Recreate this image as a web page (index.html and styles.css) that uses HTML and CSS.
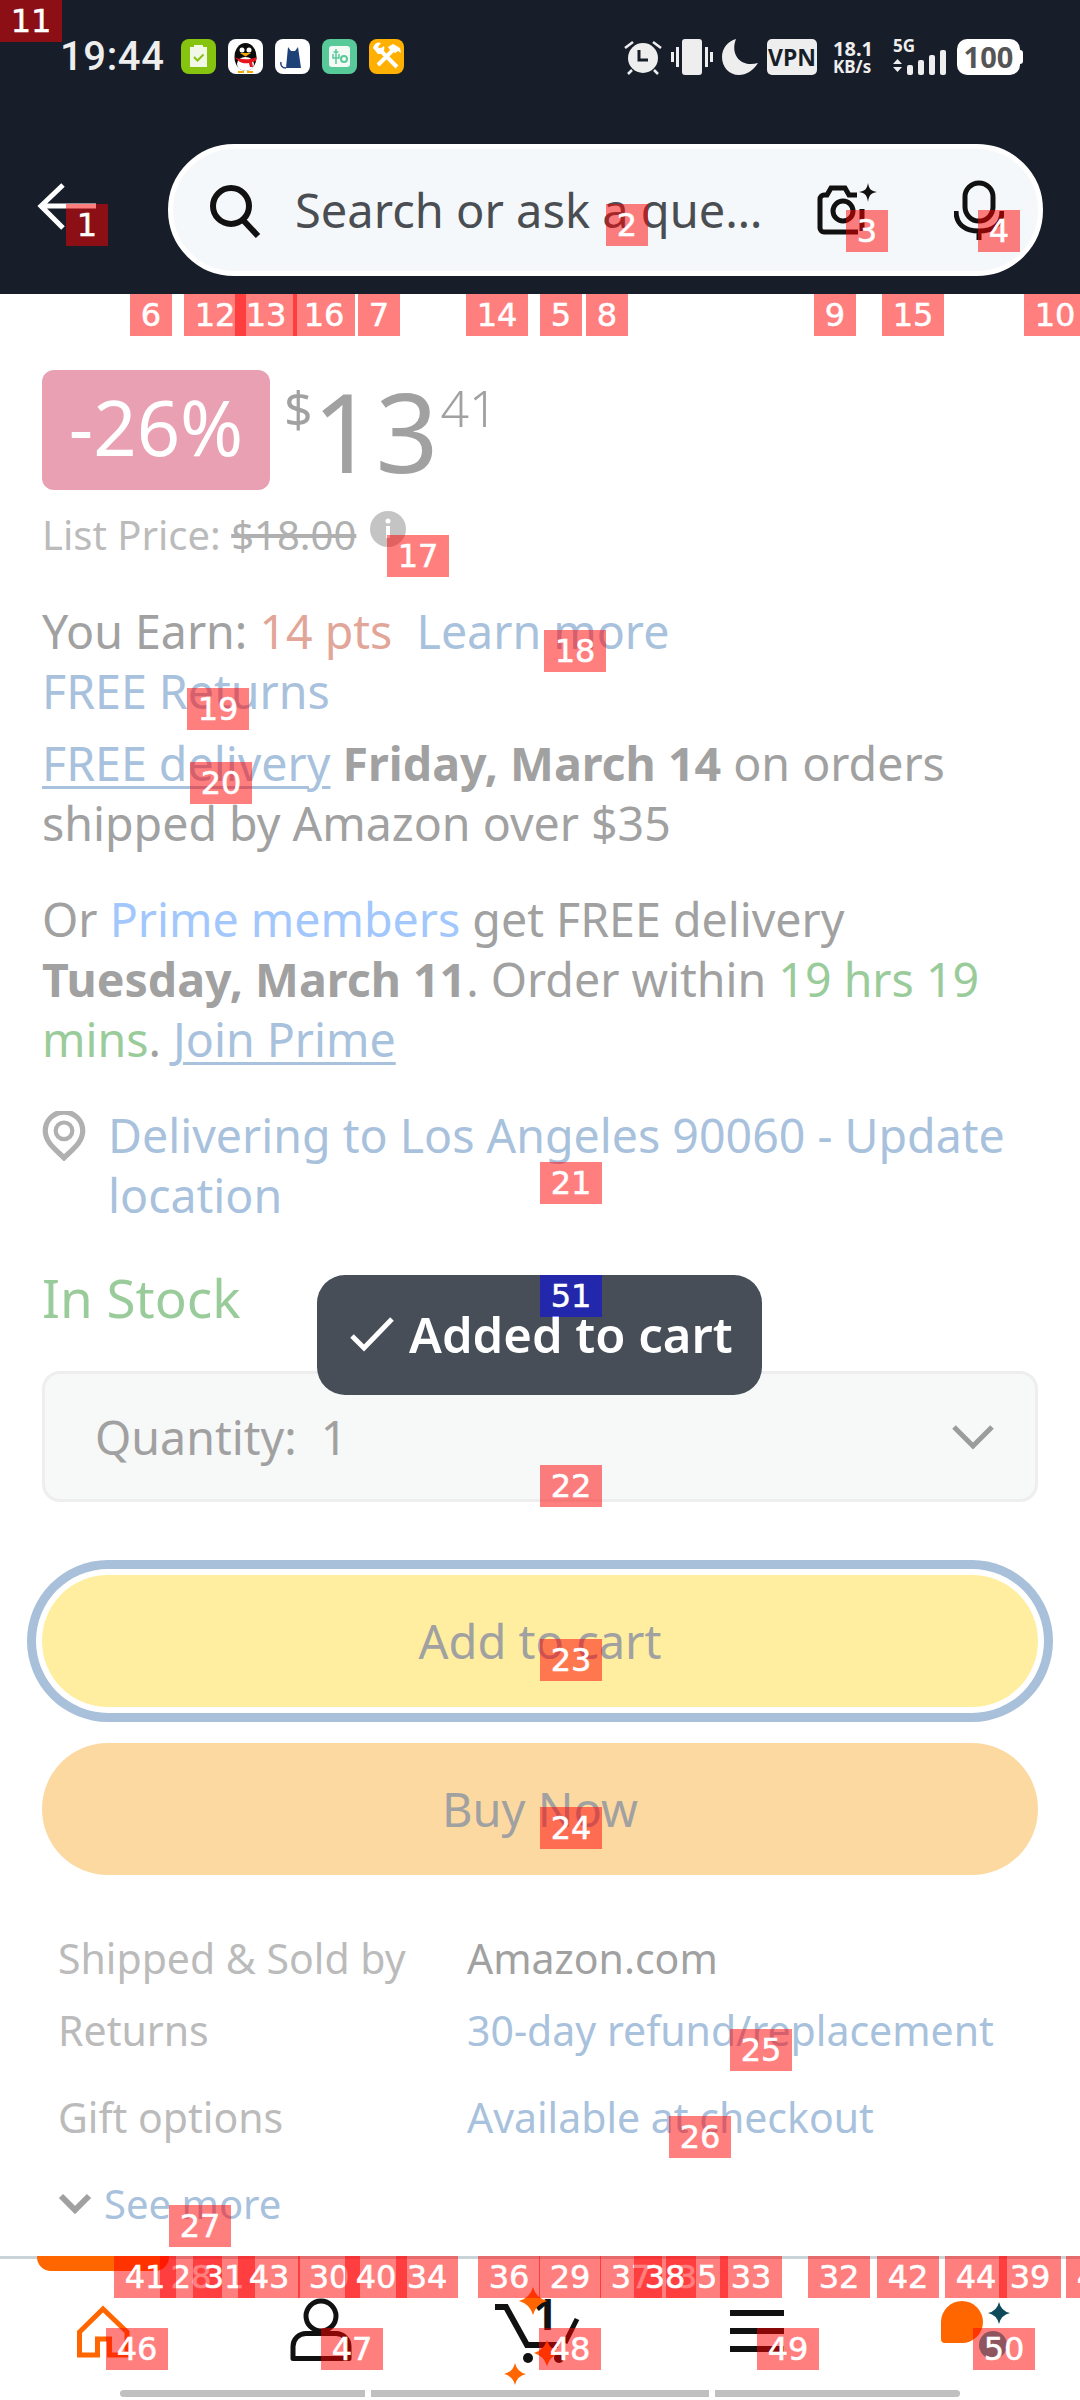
FILE: index.html
```html
<!DOCTYPE html>
<html lang="en">
<head>
<meta charset="utf-8">
<title>Amazon product</title>
<link rel="stylesheet" href="styles.css">
</head>
<body>
<div class="screen">
  <header class="top">
    <div class="status">
      <span class="time">19:44</span>
      <div class="apps">
        <svg class="app" viewBox="0 0 35 35"><rect width="35" height="35" rx="8" fill="#86c410"/><rect x="9" y="8" width="17" height="20" fill="#f2f8e8"/><rect x="13" y="6" width="9" height="3" fill="#f2f8e8"/><path d="M13 18l3.500 3.500 6-6" fill="none" stroke="#86c410" stroke-width="2"/></svg>
        <svg class="app" viewBox="0 0 35 35"><rect width="35" height="35" rx="8" fill="#fff"/><ellipse cx="17.500" cy="18" rx="11" ry="14" fill="#0c0c0c"/><ellipse cx="17.500" cy="25" rx="8.500" ry="7" fill="#fff"/><circle cx="14" cy="11" r="2.500" fill="#fff"/><circle cx="21" cy="11" r="2.500" fill="#fff"/><path d="M12 14h11l-5.500 3.500z" fill="#f5a800"/><path d="M6 18c6 3 17 3 23 0l-1 4-4 1 1 5-3 0-1-4c-3 .5-6 .5-9-1z" fill="#e8141c"/><path d="M10 32h6v2h-6zM19 32h6v2h-6z" fill="#f5a800"/></svg>
        <svg class="app" viewBox="0 0 35 35"><rect width="35" height="35" rx="8" fill="#fff"/><path d="M13 8l3 4h4l3-4 3 21H11z" fill="#1e4178"/><path d="M11 29c-4 0-6-3-5-6" fill="none" stroke="#1e4178" stroke-width="1.500"/></svg>
        <svg class="app" viewBox="0 0 35 35"><rect width="35" height="35" rx="8" fill="#58c998"/><rect x="7" y="7" width="21" height="21" rx="3" fill="#f4fbf7"/><path d="M14 10v15M11.500 13h5M11 15v4h6v-4" fill="none" stroke="#58c998" stroke-width="1.500"/><circle cx="22" cy="20" r="3" fill="none" stroke="#58c998" stroke-width="2"/></svg>
        <svg class="app" viewBox="0 0 35 35"><rect width="35" height="35" rx="8" fill="#ffb000"/><path d="M10 10l18 18M24 11L9 26" stroke="#fff" stroke-width="4"/><path d="M4 9a6 6 0 0 1 8-5l-3 4 2 2 4-3a6 6 0 0 1-6 8z" fill="#fff"/><path d="M19 8l5-3 7 4 1 5-3-2-3 2-5-3z" fill="#fff"/></svg>
      </div>
      <div class="sys">
        <svg class="sys-alarm" viewBox="0 0 38 36"><circle cx="19" cy="19" r="15" fill="#eee"/><path d="M14 11v10h9" transform="translate(1 0)" fill="none" stroke="#171e2a" stroke-width="3"/><path d="M1 9l8-6M37 9l-8-6M4 35l4-4M34 35l-4-4" stroke="#eee" stroke-width="2.500"/></svg>
        <svg class="sys-vib" viewBox="0 0 42 36"><rect x="11" width="20" height="36" rx="3" fill="#eee"/><rect x="0" y="13" width="3" height="10" fill="#eee"/><rect x="5" y="8" width="3" height="20" fill="#eee"/><rect x="34" y="8" width="3" height="20" fill="#eee"/><rect x="39" y="13" width="3" height="10" fill="#eee"/></svg>
        <svg class="sys-moon" viewBox="0 0 36 36"><path d="M14 0C8 15 18 29 36 24 31 32 24 36 17 36 7 36 0 28 0 18 0 9 6 2 14 0z" fill="#eee"/></svg>
        <span class="vpn">VPN</span>
        <span class="speed"><span>18.1</span><span class="unit">KB/s</span></span>
        <span class="net">
          <span class="fiveg">5G</span>
          <svg class="signal" viewBox="0 0 54 25"><path d="M0 14l4.500-5 4.500 5zM0 17l4.500 5 4.500-5z" fill="#eee"/><rect x="14" y="15" width="6" height="10" rx="2" fill="#eee"/><rect x="25" y="10" width="6" height="15" rx="2" fill="#eee"/><rect x="36" y="5" width="6" height="20" rx="2" fill="#eee"/><rect x="47" y="0" width="6" height="25" rx="2" fill="#eee"/></svg>
        </span>
        <span class="battery">100</span>
      </div>
    </div>
    <div class="search-row">
      <svg class="back" viewBox="0 0 60 50"><path d="M26 3L4 24l22 22M4 24h55" fill="none" stroke="#fff" stroke-width="5"/></svg>
      <div class="search">
        <svg class="ic-search" viewBox="0 0 56 56"><circle cx="24" cy="24" r="18" fill="none" stroke="#111" stroke-width="6"/><path d="M36 38l15 16" stroke="#111" stroke-width="6"/></svg>
        <span class="placeholder">Search or ask a que…</span>
        <svg class="ic-cam" viewBox="0 0 60 54"><path d="M40 12H32l-4-7H14L10 12H7a4 4 0 0 0-4 4v29a4 4 0 0 0 4 4h34" fill="none" stroke="#111" stroke-width="5"/><path d="M45 26v22" stroke="#111" stroke-width="5"/><circle cx="26" cy="28" r="10" fill="none" stroke="#111" stroke-width="5"/><path d="M51 0c1 6 3 8 9 9-6 1-8 3-9 10-1-7-3-9-9-10 6-1 8-3 9-9z" fill="#111"/></svg>
        <svg class="ic-mic" viewBox="0 0 50 60"><rect x="11" y="3" width="28" height="38" rx="14" fill="none" stroke="#111" stroke-width="5"/><path d="M2 31c0 14 10 20 23 20s23-6 23-20M25 50v10" fill="none" stroke="#111" stroke-width="5"/></svg>
      </div>
    </div>
  </header>

  <main class="content">
    <div class="price-row">
      <span class="discount">-26%</span>
      <span class="cur">$</span><span class="whole">13</span><span class="cents">41</span>
    </div>
    <div class="list-row">List Price: <s>$18.00</s>
      <svg class="info" viewBox="0 0 36 36"><circle cx="18" cy="18" r="18" fill="#c4c4c4"/><circle cx="18" cy="10" r="2.500" fill="#fff"/><rect x="16" y="15" width="4" height="12" fill="#fff"/></svg>
    </div>
    <p class="line earn">You Earn: <span class="pts">14 pts</span>&nbsp; <a class="lnk">Learn more</a></p>
    <p class="line"><a class="lnk">FREE Returns</a></p>
    <p class="line delivery"><a class="lnk ul">FREE delivery</a> <b>Friday, March 14</b> on orders<br>shipped by Amazon over $35</p>
    <p class="line prime">Or <a class="lnk-prime">Prime members</a> get FREE delivery<br><b>Tuesday, March 11</b>. Order within <span class="grn">19 hrs 19<br>mins</span>. <a class="lnk ul">Join Prime</a></p>
    <div class="loc">
      <svg class="pin" viewBox="0 0 42 48"><path d="M21 45C13 37 3 30 3 19a18 18 0 0 1 36 0c0 11-10 18-18 26z" fill="#fff" stroke="#b0b0b0" stroke-width="5"/><circle cx="21" cy="19" r="8" fill="none" stroke="#b0b0b0" stroke-width="4"/></svg>
      <p class="line"><a class="lnk">Delivering to Los Angeles 90060 - Update<br>location</a></p>
    </div>
    <p class="stock">In Stock</p>
    <div class="qty">
      <span>Quantity:&nbsp; 1</span>
      <svg class="chev" viewBox="0 0 44 26"><path d="M3 3l19 19L41 3" fill="none" stroke="#9c9c9c" stroke-width="5"/></svg>
    </div>
    <div class="btn btn-add">Add to cart</div>
    <div class="btn btn-buy">Buy Now</div>
    <dl class="facts">
      <div class="fact"><dt>Shipped &amp; Sold by</dt><dd>Amazon.com</dd></div>
      <div class="fact f2"><dt>Returns</dt><dd class="lnk">30-day refund/replacement</dd></div>
      <div class="fact f3"><dt>Gift options</dt><dd class="lnk">Available at checkout</dd></div>
    </dl>
    <div class="more">
      <svg class="more-chev" viewBox="0 0 34 22"><path d="M3 3l14 14L31 3" fill="none" stroke="#a0a0a0" stroke-width="6"/></svg>
      <a class="lnk">See more</a>
    </div>
  </main>

  <nav class="nav">
    <span class="tab-ind"></span>
    <div class="nav-items">
      <svg class="nav-ic" viewBox="0 0 216 131"><path d="M79.500 96V73L103 50l24 23v23h-17.500V80h-12v16z" fill="none" stroke="#f60" stroke-width="5"/></svg>
      <svg class="nav-ic" viewBox="0 0 216 131"><circle cx="105" cy="57" r="15" fill="none" stroke="#111" stroke-width="5"/><path d="M90 75h30a13 13 0 0 1 13 13v12H77V88a13 13 0 0 1 13-13z" transform="translate(0 -.500)" fill="none" stroke="#111" stroke-width="5" stroke-linejoin="round"/></svg>
      <svg class="nav-ic" viewBox="0 0 216 131"><path d="M63 48h11l21 38h31" fill="none" stroke="#111" stroke-width="6"/><path d="M145 60l-12 24" stroke="#111" stroke-width="5"/><circle cx="96" cy="99" r="5" fill="#111"/><circle cx="127" cy="99" r="5" fill="#111"/><text class="cart-n" x="101" y="71">1</text><path d="M101 28Q104 39 115 42Q104 45 101 56Q98 45 87 42Q98 39 101 28ZM115 81Q118 91 128 94Q118 97 115 107Q112 97 102 94Q112 91 115 81ZM83 104Q85 113 94 115Q85 117 83 126Q81 117 72 115Q81 113 83 104Z" fill="#f60"/></svg>
      <svg class="nav-ic" viewBox="0 0 216 131"><path d="M82 51h54v6H82zM82 69h54v6H82zM82 87h54v6H82z" fill="#111"/></svg>
      <svg class="nav-ic" viewBox="0 0 216 131"><circle cx="129" cy="86" r="14" fill="#1faabf"/><path d="M77 63a21 21 0 1 1 21 21H81a4 4 0 0 1-4-4z" fill="#f60"/><path d="M135 43Q137 52 146 54Q137 56 135 65Q133 56 124 54Q133 52 135 43Z" fill="#0f4a5a"/></svg>
    </div>
    <div class="gesture"><span class="seg seg-l"></span><span class="seg seg-m"></span><span class="seg seg-r"></span></div>
  </nav>

  <div class="toast">
    <svg class="toast-check" viewBox="0 0 46 36"><path d="M3 20l12 12L43 3" fill="none" stroke="#fff" stroke-width="5"/></svg>
    <span>Added to cart</span>
  </div>

  <span class="bd dk n1">1</span><span class="bd n2">2</span><span class="bd n3">3</span><span class="bd n4">4</span><span class="bd n5">5</span><span class="bd n6">6</span><span class="bd n7">7</span><span class="bd n8">8</span><span class="bd n9">9</span><span class="bd n10">10</span><span class="bd n11">11</span><span class="bd n12">12</span><span class="bd n13">13</span><span class="bd n14">14</span><span class="bd n15">15</span><span class="bd n16">16</span><span class="bd n17">17</span><span class="bd n18">18</span><span class="bd n19">19</span><span class="bd n20">20</span><span class="bd n21">21</span><span class="bd n22">22</span><span class="bd n23">23</span><span class="bd n24">24</span><span class="bd n25">25</span><span class="bd n26">26</span><span class="bd n27">27</span><span class="bd n28">28</span><span class="bd n29">29</span><span class="bd n30">30</span><span class="bd n31">31</span><span class="bd n32">32</span><span class="bd n33">33</span><span class="bd n34">34</span><span class="bd n35">35</span><span class="bd n36">36</span><span class="bd n37">37</span><span class="bd n38">38</span><span class="bd n39">39</span><span class="bd n40">40</span><span class="bd n41">41</span><span class="bd n42">42</span><span class="bd n43">43</span><span class="bd n44">44</span><span class="bd n45">45</span><span class="bd n46">46</span><span class="bd n47">47</span><span class="bd n48">48</span><span class="bd n49">49</span><span class="bd n50">50</span><span class="bd blue n51">51</span>
</div>
</body>
</html>
```
FILE: styles.css
```css
* { box-sizing: border-box; }
html, body { margin: 0; padding: 0; }
body { width: 1080px; height: 2400px; overflow: hidden; background: #fff; font-family: "Noto Sans", "Open Sans", sans-serif; color: #a1a1a1; }
p, dl, dd { margin: 0; }
a { color: inherit; }
.screen { position: relative; width: 1080px; height: 2400px; overflow: hidden; display: flex; flex-direction: column; }

/* header */
.top { height: 294px; background: #171e2a; flex: none; }
.status { height: 144px; padding: 39px 60px 0 60px; display: flex; align-items: flex-start; }
.time { width: 121px; height: 36px; font: 500 40px/36px Roboto, sans-serif; color: #eee; letter-spacing: .6px; }
.apps { display: flex; gap: 12px; }
.app { width: 35px; height: 35px; display: block; }
.sys { margin-left: auto; display: flex; align-items: flex-start; }
.sys-alarm { width: 38px; height: 36px; display: block; }
.sys-vib { width: 42px; height: 36px; margin-left: 9px; display: block; }
.sys-moon { width: 36px; height: 36px; margin-left: 9px; display: block; }
.vpn { width: 50px; height: 36px; margin-left: 9px; background: #eee; border-radius: 5px; color: #171e2a; font: 700 23px/36px "Noto Sans", sans-serif; text-align: center; }
.speed { width: 60px; margin-left: 16px; display: flex; flex-direction: column; color: #eee; font: 700 20px/19px "Noto Sans", sans-serif; height: 36px; }
.unit { font-size: 17px; line-height: 17px; }
.net { width: 54px; height: 36px; margin-left: 0; display: flex; flex-direction: column; }
.fiveg { color: #eee; font: 700 17px/14px "Noto Sans", sans-serif; }
.signal { width: 54px; height: 25px; display: block; margin-top: -3px; }
.battery { position: relative; width: 63px; height: 36px; margin-left: 10px; background: #fff; border-radius: 10px; color: #555; font: 700 29px/36px "Noto Sans", sans-serif; text-align: center; }
.battery::after { content: ""; position: absolute; right: -3px; top: 11px; width: 3px; height: 14px; background: #fff; border-radius: 0 3px 3px 0; }
.search-row { height: 132px; display: flex; align-items: center; padding-left: 37px; }
.back { width: 60px; height: 50px; display: block; flex: none; margin-top: -6px; }
.search { width: 875px; height: 132px; margin-left: 71px; background: #f5f8fa; border: 5px solid #fff; border-radius: 66px; display: flex; align-items: center; padding-left: 34px; }
.ic-search { width: 56px; height: 56px; flex: none; display: block; }
.placeholder { width: 525px; margin-left: 32px; flex: none; font-size: 47px; color: #4a4e52; white-space: nowrap; }
.ic-cam { width: 60px; height: 54px; flex: none; display: block; margin-left: -3px; }
.ic-mic { width: 50px; height: 60px; flex: none; display: block; margin-left: 77px; }

/* content */
.content { height: 1962px; flex: none; padding: 76px 42px 0; overflow: hidden; font-size: 46.5px; }
.price-row { display: flex; align-items: flex-start; height: 120px; }
.discount { width: 228px; height: 120px; background: #e9a0b2; border-radius: 12px; color: #fff; font-size: 76px; line-height: 114px; text-align: center; }
.cur { font-size: 50px; line-height: 48px; margin: 14px 0 0 14px; }
.whole { font-size: 110px; line-height: 120px; }
.cents { font-size: 50px; line-height: 48px; font-weight: 300; margin: 14px 0 0 2px; }
.list-row { margin-top: 20px; height: 50px; line-height: 50px; font-size: 40px; color: #bbb; display: flex; align-items: center; white-space: pre; }
.list-row s { color: #b0b0b0; }
.info { width: 36px; height: 36px; margin: -12px 0 0 14px; display: block; }
.line { font-size: 46.5px; line-height: 60px; white-space: nowrap; }
.earn { margin-top: 41px; }
.delivery { margin-top: 12px; }
.prime { margin-top: 36px; }
.lnk { color: #a8c1dc; }
.ul { text-decoration: underline; text-decoration-thickness: 3px; text-underline-offset: 5px; }
.lnk-prime { color: #a1c7fd; }
.pts { color: #e2a699; }
.grn { color: #99cc9a; }
b { font-weight: 700; }
.loc { margin-top: 36px; display: flex; gap: 22px; align-items: flex-start; }
.pin { width: 44px; height: 50px; margin-top: 6px; flex: none; display: block; }
.stock { margin-top: 43px; font-size: 53px; line-height: 60px; color: #99cc9a; }
.qty { margin-top: 43px; height: 131px; border: 3px solid #eee; background: #f7f8f8; border-radius: 18px; display: flex; align-items: center; padding: 0 40px 0 50px; justify-content: space-between; font-size: 46.5px; }
.chev { width: 44px; height: 26px; display: block; }
.btn { height: 132px; border-radius: 66px; display: flex; align-items: center; justify-content: center; font-size: 47px; }
.btn-add { margin-top: 73px; background: #ffee9f; box-shadow: 0 0 0 6px #fff, 0 0 0 15px #a8c0d9; }
.btn-buy { margin-top: 36px; background: #fdd9a2; }
.facts { margin-top: 53px; padding-left: 16px; font-size: 41px; }
.fact { display: flex; height: 60px; line-height: 60px; }
.f2 { margin-top: 12px; }
.f3 { margin-top: 27px; }
.fact dt { width: 409px; color: #bbb; }
.more { margin-top: 27px; padding-left: 16px; display: flex; align-items: center; gap: 12px; font-size: 40px; line-height: 60px; }
.more-chev { width: 34px; height: 22px; display: block; }

/* toast */
.toast { position: absolute; left: 317px; top: 1275px; width: 445px; height: 120px; background: #474e57; border-radius: 28px; display: flex; align-items: center; padding: 0 0 2px 32px; gap: 14px; color: #fff; font-size: 49px; font-weight: 600; }
.toast-check { width: 46px; height: 36px; display: block; }

/* nav */
.nav { position: relative; height: 144px; flex: none; border-top: 3px solid #c8d4d8; background: #fff; }
.tab-ind { position: absolute; left: 37px; top: -3px; width: 132px; height: 15px; background: #f60; border-radius: 0 0 14px 14px; }
.nav-items { display: grid; grid-template-columns: repeat(5, 216px); height: 131px; }
.nav-ic { width: 216px; height: 131px; display: block; overflow: visible; }
.cart-n { font: 700 43px "Noto Sans", sans-serif; fill: #111; }
.gesture { display: flex; gap: 6px; padding-left: 120px; }
.seg { height: 7px; background: #c0c0c0; display: block; }
.seg-l { width: 245px; border-radius: 4px 0 0 4px; }
.seg-m { width: 338px; }
.seg-r { width: 245px; border-radius: 0 4px 4px 0; }

/* annotation badges */
.bd { position: absolute; height: 42px; padding: 0 10.7px; background: rgba(255, 0, 0, .5); color: #fff; font: 400 32px/42px "DejaVu Sans", sans-serif; -webkit-text-stroke: .5px #fff; white-space: nowrap; }
.blue { background: rgba(0, 0, 255, .5); }
.n1 { left: 66px; top: 204px; } .n2 { left: 606px; top: 204px; } .n3 { left: 846px; top: 210px; } .n4 { left: 978px; top: 210px; }
.n5 { left: 540px; top: 294px; } .n6 { left: 130px; top: 294px; } .n7 { left: 358px; top: 294px; } .n8 { left: 586px; top: 294px; }
.n9 { left: 814px; top: 294px; } .n10 { left: 1024px; top: 294px; } .n11 { left: 0; top: 0; } .n12 { left: 184px; top: 294px; }
.n13 { left: 235px; top: 294px; } .n14 { left: 466px; top: 294px; } .n15 { left: 882px; top: 294px; } .n16 { left: 293px; top: 294px; }
.n17 { left: 387px; top: 535px; } .n18 { left: 544px; top: 630px; } .n19 { left: 187px; top: 688px; } .n20 { left: 190px; top: 762px; }
.n21 { left: 540px; top: 1162px; } .n22 { left: 540px; top: 1465px; } .n23 { left: 540px; top: 1639px; } .n24 { left: 540px; top: 1807px; }
.n25 { left: 730px; top: 2029px; } .n26 { left: 669px; top: 2116px; } .n27 { left: 169px; top: 2205px; }
.n28 { left: 160px; top: 2256px; } .n29 { left: 539px; top: 2256px; } .n30 { left: 298px; top: 2256px; } .n31 { left: 193px; top: 2256px; }
.n32 { left: 808px; top: 2256px; } .n33 { left: 720px; top: 2256px; } .n34 { left: 396px; top: 2256px; } .n35 { left: 666px; top: 2256px; }
.n36 { left: 478px; top: 2256px; } .n37 { left: 600px; top: 2256px; } .n38 { left: 634px; top: 2256px; } .n39 { left: 999px; top: 2256px; }
.n40 { left: 345px; top: 2256px; } .n41 { left: 114px; top: 2256px; } .n42 { left: 877px; top: 2256px; } .n43 { left: 238px; top: 2256px; }
.n44 { left: 945px; top: 2256px; } .n45 { left: 1066px; top: 2256px; } .n46 { left: 106px; top: 2328px; } .n47 { left: 321px; top: 2328px; }
.n48 { left: 539px; top: 2328px; } .n49 { left: 757px; top: 2328px; } .n50 { left: 973px; top: 2328px; } .n51 { left: 540px; top: 1275px; }
```
